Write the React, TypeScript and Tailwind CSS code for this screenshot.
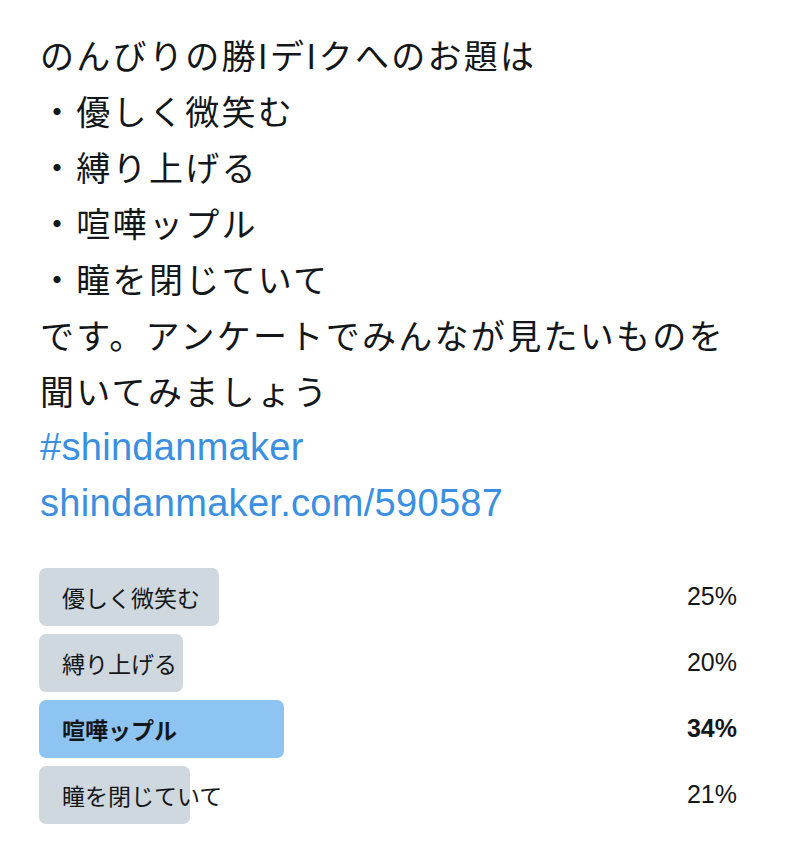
import React from "react";

const lines = [
  "のんびりの勝IデIクへのお題は",
  "・優しく微笑む",
  "・縛り上げる",
  "・喧嘩ップル",
  "・瞳を閉じていて",
  "です。アンケートでみんなが見たいものを",
  "聞いてみましょう",
];

const options = [
  { label: "優しく微笑む", pct: 25 },
  { label: "縛り上げる", pct: 20 },
  { label: "喧嘩ップル", pct: 34, winner: true },
  { label: "瞳を閉じていて", pct: 21 },
];

export default function App() {
  return (
    <div className="w-[800px] h-[845px] bg-white overflow-hidden">
      <div className="px-[40px] pt-[27px]">
        {/* Tweet body */}
        <div className="font-['Noto_Sans_CJK_JP','Noto_Sans',sans-serif] text-[34px] leading-[56px] text-[#14171a] tracking-[2.3px]">
          {lines.map((l, i) => (
            <div key={i}>{l}</div>
          ))}
        </div>
        <div className="font-['Liberation_Sans',Arial,sans-serif] text-[38px] leading-[56px] text-[#3b8fe0] tracking-[0.3px]">
          <div>#shindanmaker</div>
          <div>shindanmaker.com/590587</div>
        </div>

        {/* Poll */}
        <div className="mt-[37px] flex flex-col gap-[8px] w-[698px] -ml-[1px]">
          {options.map((o) => (
            <div key={o.label} className="relative h-[58px] flex items-center">
              <div
                className={`absolute left-0 top-0 h-full rounded-[7px] ${
                  o.winner ? "bg-[#8ec4f2]" : "bg-[#cfd8df]"
                }`}
                style={{ width: `${o.pct * 7.2}px` }}
              />
              <span
                className={`relative pl-[23px] font-['Noto_Sans_CJK_JP','Noto_Sans',sans-serif] text-[23px] text-[#14171a] ${
                  o.winner ? "font-bold" : ""
                }`}
              >
                {o.label}
              </span>
              <span
                className={`relative ml-auto font-['Liberation_Sans',Arial,sans-serif] text-[25px] text-[#14171a] ${
                  o.winner ? "font-bold" : ""
                }`}
              >
                {o.pct}%
              </span>
            </div>
          ))}
        </div>
      </div>
    </div>
  );
}
